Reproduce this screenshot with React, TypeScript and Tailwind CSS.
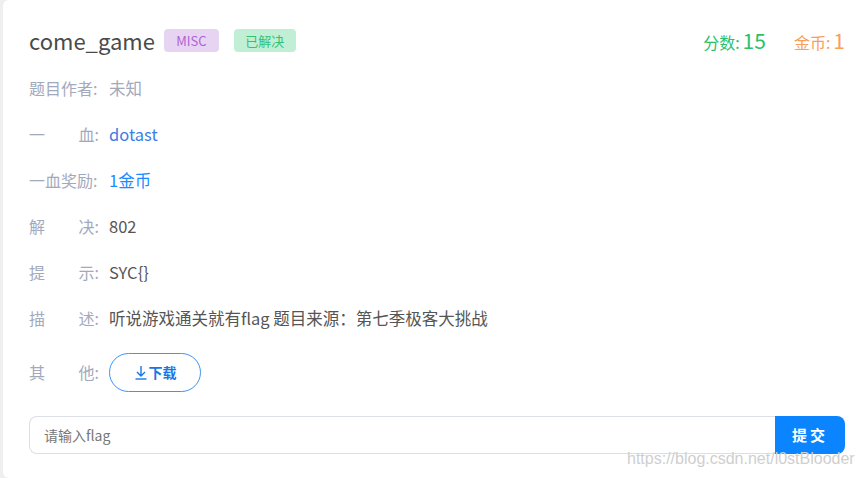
import React from 'react'

const rows: { label: string[]; value: React.ReactNode }[] = [
  { label: ['题目作者:'], value: <span className="text-[#a3a9bd]">未知</span> },
  { label: ['一', '血:'], value: <span className="text-[#3a7ee6]">dotast</span> },
  { label: ['一血奖励:'], value: <span className="text-[#1a8cff]">1金币</span> },
  { label: ['解', '决:'], value: <span className="text-[#555]">802</span> },
  { label: ['提', '示:'], value: <span className="text-[#555]">SYC{'{}'}</span> },
  {
    label: ['描', '述:'],
    value: <span className="text-[#555]">听说游戏通关就有flag 题目来源：第七季极客大挑战</span>,
  },
]

const Label: React.FC<{ parts: string[] }> = ({ parts }) => (
  <div className="flex w-[70px] justify-between text-[16px] text-[#a3a9bd]">
    {parts.map((p) => (
      <span key={p}>{p}</span>
    ))}
  </div>
)

export default function App() {
  return (
    <div
      className="relative min-h-[478px] w-full bg-[#efefef] pl-[3px]"
      style={{ fontFamily: '"Noto Sans CJK SC", "Noto Sans", sans-serif' }}
    >
      <div className="min-h-[478px] rounded-l-[6px] bg-white pl-[26px] pr-[22px] pt-[21px]">
        {/* header */}
        <div className="flex h-[38px] items-center">
          <span className="text-[22px] leading-none text-[#4a4a4a]">come_game</span>
          <span className="ml-[9px] flex h-[23px] w-[55px] items-center justify-center rounded-[4px] bg-[#e7d4f3] text-[13px] leading-none text-[#b062d2]">
            MISC
          </span>
          <span className="ml-[15px] flex h-[23px] w-[62px] items-center justify-center rounded-[4px] bg-[#c0efd5] text-[13px] leading-none text-[#36c074]">
            已解决
          </span>
          <div className="ml-auto flex items-baseline leading-none">
            <span className="text-[16px] text-[#2cc06a]">分数:</span>
            <span className="ml-[3px] text-[21px] text-[#2cc06a]">15</span>
            <span className="ml-[28px] text-[16px] text-[#f6a158]">金币:</span>
            <span className="ml-[3px] text-[21px] text-[#f6a158]">1</span>
          </div>
        </div>

        {/* info rows */}
        <div className="mt-[6px] leading-none">
          {rows.map((r, i) => (
            <div key={i} className="flex h-[46px] items-center">
              <Label parts={r.label} />
              <div className="ml-[10px] text-[16.5px]">{r.value}</div>
            </div>
          ))}
          <div className="flex h-[62px] items-center">
            <Label parts={['其', '他:']} />
            <button className="ml-[10px] flex h-[39px] w-[92px] items-center justify-center rounded-full border border-[#3d96f5] text-[14px] font-bold text-[#1677e6]">
              <svg width="14" height="16" viewBox="0 0 14 16" className="mr-[1px]">
                <path d="M7 2v10M3 8l4 4 4-4" fill="none" stroke="#1677e6" strokeWidth="1.4" />
                <path d="M1.5 15h11" stroke="#1677e6" strokeWidth="1.4" />
              </svg>
              下载
            </button>
          </div>
        </div>

        {/* flag input */}
        <div className="mt-[13px] flex h-[38px]">
          <div className="flex flex-1 items-center rounded-l-[8px] border border-r-0 border-[#dcdfe6] pl-[14px] text-[14px] text-[#777]">
            请输入flag
          </div>
          <button className="flex w-[70px] items-center justify-center rounded-r-[8px] bg-[#0a85ff] text-[15px] font-bold tracking-[3px] text-white">
            提交
          </button>
        </div>
      </div>

      <div className="pointer-events-none absolute left-[627px] top-[447px] text-[16px] text-[#cfcfcf]" style={{ fontFamily: '"Liberation Sans", sans-serif' }}>
        https://blog.csdn.net/l0stBlooder
      </div>
    </div>
  )
}
